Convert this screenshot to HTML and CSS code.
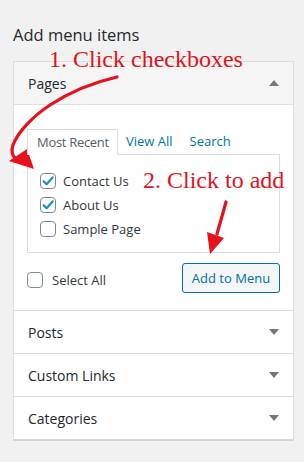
FILE: index.html
```html
<!DOCTYPE html>
<html>
<head>
<meta charset="utf-8">
<link rel="stylesheet" href="styles.css">
</head>
<body>
<div class="wrap">
  <h2 class="title">Add menu items</h2>
  <div class="panel">
    <div class="section open">
      <div class="sec-head">Pages <span class="tri up"></span></div>
      <div class="sec-body">
        <ul class="tabs">
          <li class="tab active">Most Recent</li>
          <li class="tab">View All</li>
          <li class="tab">Search</li>
        </ul>
        <div class="tab-panel">
          <label class="row"><span class="cb checked"><svg viewBox="0 0 16 16" width="16" height="16"><path d="M3.6 8.2 L6.6 11.2 L12.6 4.4" fill="none" stroke="#1e8cbe" stroke-width="2.2" stroke-linecap="round" stroke-linejoin="round"/></svg></span>Contact Us</label>
          <label class="row"><span class="cb checked"><svg viewBox="0 0 16 16" width="16" height="16"><path d="M3.6 8.2 L6.6 11.2 L12.6 4.4" fill="none" stroke="#1e8cbe" stroke-width="2.2" stroke-linecap="round" stroke-linejoin="round"/></svg></span>About Us</label>
          <label class="row"><span class="cb"></span>Sample Page</label>
        </div>
        <div class="actions">
          <label class="row select-all"><span class="cb"></span>Select All</label>
          <button class="btn">Add to Menu</button>
        </div>
      </div>
    </div>
    <div class="section"><div class="sec-head">Posts <span class="tri down"></span></div></div>
    <div class="section"><div class="sec-head">Custom Links <span class="tri down"></span></div></div>
    <div class="section last"><div class="sec-head">Categories <span class="tri down"></span></div></div>
  </div>

  <div class="note note1">1. Click checkboxes</div>
  <div class="note note2">2. Click to add</div>
  <svg class="arrows" width="304" height="462" viewBox="0 0 304 462">
    <path d="M117,77 C95,82 70,92 50,105 C32,117 18,132 13,145 C11,151 12,155 15,158" fill="none" stroke="#e8101a" stroke-width="3.2" stroke-linecap="round"/>
    <polygon points="9,161 27,149 34,169" fill="#e8101a"/>
    <path d="M226,202 L217,234" fill="none" stroke="#e8101a" stroke-width="3.2" stroke-linecap="round"/>
    <polygon points="207,232 224,238 210,254" fill="#e8101a"/>
  </svg>
</div>
</body>
</html>
```
FILE: styles.css
```css
html, body {
  margin: 0;
  padding: 0;
  background: #f1f1f1;
}
body {
  font-family: "Open Sans", "Noto Sans", sans-serif;
  color: #23282d;
  font-size: 13px;
}
.wrap {
  position: relative;
  width: 304px;
  height: 462px;
  padding-top: 25px;
  box-sizing: border-box;
}
.title {
  margin: 0 0 16px 13px;
  font-size: 16.5px;
  line-height: 20px;
  font-weight: 400;
  color: #23282d;
}
.panel {
  margin-left: 13px;
  width: 281px;
  box-sizing: border-box;
  border: 1px solid #dcdcdc;
  border-bottom: 2px solid #d4d4d4;
  background: #fff;
}
.section {
  border-bottom: 1px solid #dcdcdc;
}
.section.last {
  border-bottom: 0;
}
.sec-head {
  height: 42px;
  display: flex;
  align-items: center;
  justify-content: space-between;
  padding: 0 14px 0 14px;
  font-size: 14px;
  color: #23282d;
}
.section.open .sec-head {
  background: #f5f5f5;
  border-bottom: 1px solid #e2e2e2;
}
.tri {
  width: 0;
  height: 0;
  border-left: 5px solid transparent;
  border-right: 5px solid transparent;
}
.tri.up {
  border-bottom: 6px solid #72777c;
}
.tri.down {
  border-top: 6px solid #72777c;
}
.sec-body {
  padding: 24px 13px 0 13px;
}
.tabs {
  list-style: none;
  margin: 0;
  padding: 0;
  display: flex;
  height: 25px;
  align-items: stretch;
}
.tab {
  color: #0073aa;
  display: flex;
  align-items: center;
  padding: 0 8px 1px 8px;
  font-size: 13px;
  white-space: nowrap;
}
.tab.active {
  color: #555d66;
  background: #fff;
  border: 1px solid #dcdcdc;
  border-bottom: 0;
  margin-bottom: -1px;
  position: relative;
  z-index: 1;
  width: 91px;
  box-sizing: border-box;
  letter-spacing: -0.3px;
  padding: 0 8px 1px 9px;
}
.tab:nth-child(3) { margin-left: 1px; }
.tab-panel {
  border: 1px solid #dcdcdc;
  height: 99px;
  box-sizing: border-box;
  padding: 14px 12px 0 12px;
  background: #fff;
}
.row {
  display: flex;
  align-items: center;
  height: 24px;
  color: #32373c;
  font-size: 13px;
}
.cb {
  width: 16px;
  height: 16px;
  box-sizing: border-box;
  border: 1px solid #7e8993;
  border-radius: 4px;
  background: #fff;
  margin-right: 7px;
  display: flex;
  align-items: center;
  justify-content: center;
  flex: none;
}
.cb svg {
  margin: -1px;
}
.actions {
  display: flex;
  justify-content: space-between;
  align-items: center;
  padding: 10px 0 17px 0;
}
.select-all {
  margin-top: 4px;
}
.select-all .cb {
  margin-right: 9px;
}
.btn {
  width: 98px;
  height: 30px;
  border: 1px solid #0071a1;
  border-radius: 3px;
  background: #f3f5f6;
  color: #0071a1;
  font-family: "Open Sans", "Noto Sans", sans-serif;
  font-size: 13px;
  padding: 0;
}
.note {
  position: absolute;
  font-family: "Liberation Serif", "Times New Roman", serif;
  font-size: 24px;
  line-height: 24px;
  color: #e0141c;
  white-space: nowrap;
}
.note1 { left: 49px; top: 47px; }
.note2 { left: 143px; top: 168px; }
.arrows {
  position: absolute;
  left: 0;
  top: 0;
  pointer-events: none;
}
```
